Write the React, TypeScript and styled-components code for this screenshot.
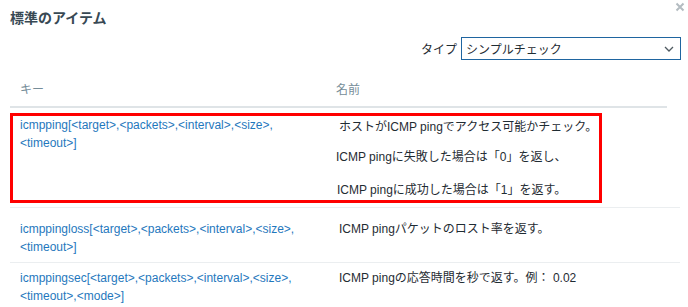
import { createGlobalStyle, styled } from 'styled-components';

const GlobalStyle = createGlobalStyle`
    body {
        margin: 0;
        background: #ffffff;
        font-family: "Liberation Sans", Arial, "Noto Sans CJK JP", sans-serif;
        font-size: 12px;
        color: #1f2c33;
    }
`;

// Dialog frame
const StyledDialog = styled.div`
    position: relative;
    width: 688px;
    height: 307px;
    overflow: hidden;
    padding: 8px 0 0 10px;
    box-sizing: border-box;
`;

const StyledTitle = styled.h4`
    margin: 0;
    height: 20px;
    line-height: 20px;
    font-size: 14px;
    font-weight: bold;
    color: #384954;
`;

const StyledClose = styled.button`
    position: absolute;
    top: 2px;
    right: 3px;
    width: 10px;
    height: 10px;
    padding: 0;
    border: none;
    background: none;
    display: flex;
`;

// Type filter above the table
const StyledToolbar = styled.div`
    display: flex;
    justify-content: flex-end;
    align-items: center;
    gap: 4px;
    margin-top: 9px;
    padding-right: 7px;
`;

const StyledLabel = styled.span`
    font-size: 12px;
    color: #1f2c33;
`;

const StyledSelect = styled.div`
    display: flex;
    align-items: center;
    justify-content: space-between;
    width: 220px;
    height: 23px;
    box-sizing: border-box;
    border: 1px solid #1f65a0;
    padding: 0 6px 0 4px;
    font-size: 12px;
    color: #1f2c33;
`;

// Table of items
const StyledTable = styled.div`
    width: 670px;
    margin-top: 21px;
`;

const StyledHead = styled.div`
    display: grid;
    grid-template-columns: 326px 1fr;
    width: 657px;
    height: 25px;
    border-bottom: 2px solid #dfe4e7;
    color: #768d99;
    line-height: 18px;
`;

const StyledHeadCell = styled.div<{ $pad: number }>`
    padding-left: ${p => p.$pad}px;
`;

const StyledRow = styled.div<{ $height: number; $top: number; $last?: boolean }>`
    position: relative;
    display: grid;
    grid-template-columns: 326px 1fr;
    height: ${p => p.$height}px;
    box-sizing: border-box;
    padding-top: ${p => p.$top}px;
    border-bottom: ${p => (p.$last ? 'none' : '1px solid #ebeef0')};
`;

const StyledKey = styled.a`
    padding-left: 10px;
    line-height: 18px;
    color: #1f78bd;
    text-decoration: none;
    white-space: nowrap;
`;

const StyledName = styled.div`
    display: flex;
    flex-direction: column;
`;

const StyledLine = styled.div<{ $indent: number; $gap: number }>`
    padding-left: ${p => p.$indent}px;
    margin-top: ${p => p.$gap}px;
    line-height: 18px;
    color: #1f2c33;
    white-space: nowrap;
`;

// Red annotation frame drawn over the first row
const StyledMark = styled.div`
    position: absolute;
    left: 0;
    top: 5px;
    width: 592px;
    height: 90px;
    box-sizing: border-box;
    border: 3px solid #ff0000;
    pointer-events: none;
`;

export default function App() {
    return (
        <>
            <GlobalStyle />
            <StyledDialog>
                <StyledTitle>標準のアイテム</StyledTitle>
                <StyledClose aria-label="閉じる">
                    <svg width="10" height="10" viewBox="0 0 10 10">
                        <path d="M1.5 1.5 L8.5 8.5 M8.5 1.5 L1.5 8.5" stroke="#b4bcc1" strokeWidth="2" />
                    </svg>
                </StyledClose>

                <StyledToolbar>
                    <StyledLabel>タイプ</StyledLabel>
                    <StyledSelect>
                        <span>シンプルチェック</span>
                        <svg width="10" height="6" viewBox="0 0 10 6">
                            <path d="M1 1 L5 5 L9 1" fill="none" stroke="#4f5a61" strokeWidth="1.3" />
                        </svg>
                    </StyledSelect>
                </StyledToolbar>

                <StyledTable>
                    <StyledHead>
                        <StyledHeadCell $pad={10}>キー</StyledHeadCell>
                        <StyledHeadCell $pad={0}>名前</StyledHeadCell>
                    </StyledHead>

                    {/* icmpping */}
                    <StyledRow $height={100} $top={8}>
                        <StyledKey href="#">
                            icmpping[&lt;target&gt;,&lt;packets&gt;,&lt;interval&gt;,&lt;size&gt;,<br />
                            &lt;timeout&gt;]
                        </StyledKey>
                        <StyledName>
                            <StyledLine $indent={3} $gap={2}>ホストがICMP pingでアクセス可能かチェック。</StyledLine>
                            <StyledLine $indent={-1} $gap={12}>ICMP pingに失敗した場合は「0」を返し、</StyledLine>
                            <StyledLine $indent={1} $gap={15}>ICMP pingに成功した場合は「1」を返す。</StyledLine>
                        </StyledName>
                        <StyledMark />
                    </StyledRow>

                    {/* icmppingloss */}
                    <StyledRow $height={55} $top={12}>
                        <StyledKey href="#">
                            icmppingloss[&lt;target&gt;,&lt;packets&gt;,&lt;interval&gt;,&lt;size&gt;,<br />
                            &lt;timeout&gt;]
                        </StyledKey>
                        <StyledName>
                            <StyledLine $indent={3} $gap={0}>ICMP pingパケットのロスト率を返す。</StyledLine>
                        </StyledName>
                    </StyledRow>

                    {/* icmppingsec */}
                    <StyledRow $height={50} $top={6} $last>
                        <StyledKey href="#">
                            icmppingsec[&lt;target&gt;,&lt;packets&gt;,&lt;interval&gt;,&lt;size&gt;,<br />
                            &lt;timeout&gt;,&lt;mode&gt;]
                        </StyledKey>
                        <StyledName>
                            <StyledLine $indent={3} $gap={0}>ICMP pingの応答時間を秒で返す。例： 0.02</StyledLine>
                        </StyledName>
                    </StyledRow>
                </StyledTable>
            </StyledDialog>
        </>
    );
}
